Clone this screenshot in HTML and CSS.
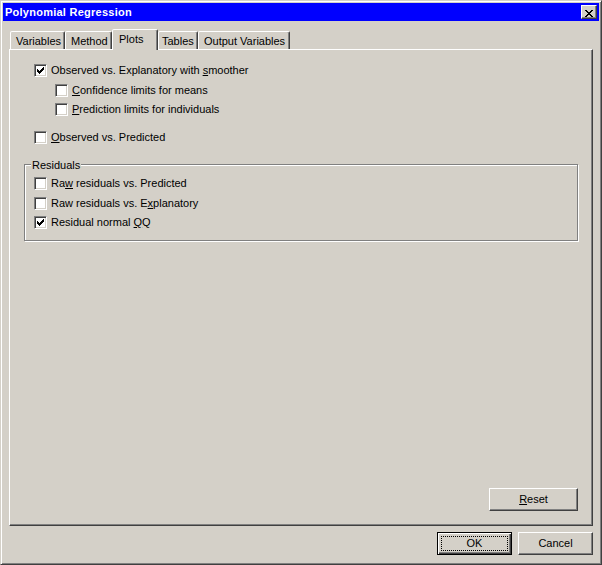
FILE: index.html
```html
<!DOCTYPE html>
<html>
<head>
<meta charset="utf-8">
<title>Polynomial Regression</title>
<link rel="stylesheet" href="styles.css">
</head>
<body>
<div class="window">
  <div class="titlebar">
    <span class="title">Polynomial Regression</span>
    <button class="close" type="button" aria-label="Close">
      <svg width="8" height="7" viewBox="0 0 8 7" shape-rendering="crispEdges"><path fill="#000" d="M0 0h2v1H0zM6 0h2v1H6zM1 1h2v1H1zM5 1h2v1H5zM2 2h4v1H2zM3 3h2v1H3zM2 4h4v1H2zM1 5h2v1H1zM5 5h2v1H5zM0 6h2v1H0zM6 6h2v1H6z"/></svg>
    </button>
  </div>
  <div class="body">
    <div class="tabs">
      <div class="tab tab-variables">Variables</div>
      <div class="tab tab-method">Method</div>
      <div class="tab tab-plots active">Plots</div>
      <div class="tab tab-tables">Tables</div>
      <div class="tab tab-output">Output Variables</div>
    </div>
    <div class="panel">
      <div class="options">
        <div class="opt">
          <span class="box"><svg width="7" height="7" viewBox="0 0 7 7" shape-rendering="crispEdges"><path fill="#000" d="M6 0h1v1H6zM5 1h2v1H5zM0 2h1v1H0zM4 2h3v1H4zM0 3h2v1H0zM3 3h3v1H3zM0 4h5v1H0zM1 5h3v1H1zM2 6h1v1H2z"/></svg></span>
          <span>Observed vs. Explanatory with <u>s</u>moother</span>
        </div>
        <div class="sub">
          <div class="opt"><span class="box"></span><span><u>C</u>onfidence limits for means</span></div>
          <div class="opt"><span class="box"></span><span><u>P</u>rediction limits for individuals</span></div>
        </div>
        <div class="opt opt-sep"><span class="box"></span><span><u>O</u>bserved vs. Predicted</span></div>
      </div>
      <div class="group">
        <div class="legend">Residuals</div>
        <div class="opt opt-g1"><span class="box"></span><span>Ra<u>w</u> residuals vs. Predicted</span></div>
        <div class="opt opt-g2"><span class="box"></span><span>Raw residuals vs. E<u>x</u>planatory</span></div>
        <div class="opt opt-g3">
          <span class="box"><svg width="7" height="7" viewBox="0 0 7 7" shape-rendering="crispEdges"><path fill="#000" d="M6 0h1v1H6zM5 1h2v1H5zM0 2h1v1H0zM4 2h3v1H4zM0 3h2v1H0zM3 3h3v1H3zM0 4h5v1H0zM1 5h3v1H1zM2 6h1v1H2z"/></svg></span>
          <span>Residual normal <u>Q</u>Q</span>
        </div>
      </div>
      <div class="panel-footer">
        <button class="btn btn-reset" type="button"><u>R</u>eset</button>
      </div>
    </div>
    <div class="actions">
      <button class="btn default" type="button"><span class="focus">OK</span></button>
      <button class="btn" type="button">Cancel</button>
    </div>
  </div>
</div>
</body>
</html>
```

FILE: styles.css
```css
* { box-sizing: border-box; }
html, body { margin: 0; padding: 0; }
body {
  background: #d4d0c8;
  font-family: "Liberation Sans", Arial, sans-serif;
  font-size: 11px;
  line-height: 13px;
  color: #000;
}
u { text-decoration: underline; text-underline-offset: 1px; }

.window {
  width: 602px;
  height: 565px;
  background: #d4d0c8;
  border: 1px solid;
  border-color: #d4d0c8 #404040 #404040 #d4d0c8;
  box-shadow: inset 1px 1px #fff, inset -1px -1px #808080;
  padding: 2px;
  display: flex;
  flex-direction: column;
}

.titlebar {
  height: 18px;
  background: #0000ff;
  display: flex;
  align-items: center;
  justify-content: space-between;
  padding: 0 2px;
}
.title {
  color: #fff;
  font-weight: bold;
  letter-spacing: 0.25px;
  line-height: 13px;
}
.close {
  width: 16px;
  height: 14px;
  padding: 2px 0 0 3px;
  margin: 0;
  background: #d4d0c8;
  border: 1px solid;
  border-color: #fff #404040 #404040 #fff;
  box-shadow: inset -1px -1px #808080;
  display: block;
}
.close svg { display: block; }

.body {
  flex: 1;
  padding: 8px 6px 0;
  display: flex;
  flex-direction: column;
}

.tabs {
  display: flex;
  align-items: flex-end;
  height: 21px;
  margin-bottom: -1px;
  padding-left: 1px;
}
.tab {
  height: 18px;
  margin-bottom: 1px;
  border: 1px solid;
  border-bottom: 0;
  border-color: #fff #404040 transparent #fff;
  border-radius: 2px 2px 0 0;
  box-shadow: inset -1px 0 #808080;
  background: #d4d0c8;
  padding: 3px 0 0 5px;
  white-space: nowrap;
}
.tab.active {
  height: 21px;
  margin-bottom: 0;
  padding-left: 6px;
  position: relative;
  z-index: 1;
}
.tab-variables { width: 55px; }
.tab-method { width: 47px; }
.tab-plots { width: 46px; }
.tab-tables { width: 40px; padding-left: 3px; }
.tab-output { width: 92px; }

.panel {
  height: 477px;
  border: 1px solid;
  border-color: #fff #404040 #404040 #fff;
  box-shadow: inset -1px -1px #808080;
  padding: 14px;
  display: flex;
  flex-direction: column;
}

.options {
  margin-left: 10px;
  display: flex;
  flex-direction: column;
}
.sub {
  margin: 7px 0 0 21px;
  display: flex;
  flex-direction: column;
  gap: 6px;
}
.opt {
  display: flex;
  align-items: center;
  gap: 4px;
  height: 13px;
  white-space: nowrap;
}
.opt-sep { margin-top: 15px; }
.box {
  width: 13px;
  height: 13px;
  flex: none;
  background: #fff;
  border: 1px solid;
  border-color: #808080 #fff #fff #808080;
  box-shadow: inset 1px 1px #404040, inset -1px -1px #d4d0c8;
  padding: 2px;
}
.box svg { display: block; }

.group {
  margin-top: 20px;
  border: 1px solid #808080;
  box-shadow: inset 1px 1px #fff, 1px 1px #fff;
  padding: 0 0 11px 9px;
  display: flex;
  flex-direction: column;
}
.legend {
  align-self: flex-start;
  margin: -6px 0 0 -3px;
  padding: 0 1px;
  background: #d4d0c8;
}
.opt-g1 { margin-top: 5px; }
.opt-g2 { margin-top: 7px; }
.opt-g3 { margin-top: 6px; }

.panel-footer {
  margin-top: auto;
  display: flex;
  justify-content: flex-end;
}

.btn {
  width: 75px;
  height: 23px;
  margin: 0;
  padding: 0;
  font: inherit;
  line-height: 13px;
  color: #000;
  background: #d4d0c8;
  border: 1px solid;
  border-color: #fff #404040 #404040 #fff;
  box-shadow: inset -1px -1px #808080;
}
.btn-reset { width: 89px; }
.btn.default {
  border-color: #000;
  box-shadow: inset 1px 1px #fff, inset -1px -1px #404040, inset -2px -2px #808080;
  padding: 3px;
}
.focus {
  height: 100%;
  border: 1px dotted #000;
  display: flex;
  align-items: center;
  justify-content: center;
}

.actions {
  margin-top: 6px;
  display: flex;
  justify-content: flex-end;
  gap: 6px;
}
```
